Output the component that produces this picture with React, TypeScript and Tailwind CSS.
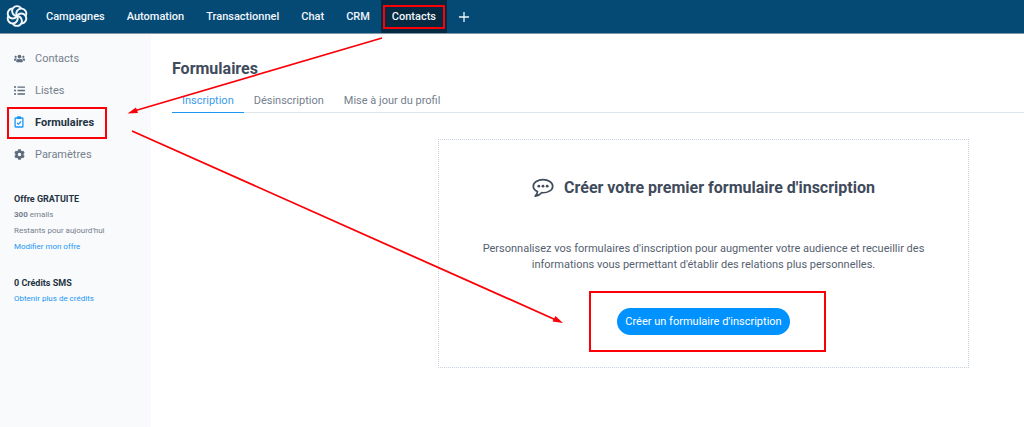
import type { ReactNode } from "react";
import { FaCog, FaListUl, FaUsers } from "react-icons/fa";

const NAV = ["Campagnes", "Automation", "Transactionnel", "Chat", "CRM"];
const TABS = ["Inscription", "Désinscription", "Mise à jour du profil"];

function Logo() {
  return (
    <svg viewBox="0 0 24 24" className="size-[22px]" fill="none" stroke="#f1f6fa" strokeWidth="2.1" aria-label="Sendinblue">
      {[0, 60, 120, 180, 240, 300].map((angle) => (
        <path key={angle} d="M12 12A5.4 5.4 0 1 1 16.7 3.9" transform={`rotate(${angle} 12 12)`} />
      ))}
    </svg>
  );
}

function ClipboardIcon() {
  return (
    <svg viewBox="0 0 10 12" className="h-3 w-[10px]" fill="none" stroke="#1a96f5" strokeWidth="1.3">
      <rect x="1.1" y="2" width="7.8" height="9" rx="0.6" />
      <path d="M3 2.2h4M3.2 1.2h3.6" strokeWidth="1.8" />
      <path d="M3.1 6.9l1.4 1.3 2.6-2.8" />
    </svg>
  );
}

function SpeechIcon() {
  return (
    <svg viewBox="0 0 22 20" className="h-5 w-[22px]" fill="none" stroke="#3f4b5c" strokeWidth="1.7">
      <path
        d="M11 1.6C5.800 1.600 1.300 4.500 1.300 8.200C1.300 10.500 3.100 12.500 5.500 13.600C5.500 15.400 4.500 16.900 3.200 18.200C6.100 17.700 8.200 16.500 9.600 14.700C15.800 15.200 20.700 12.200 20.700 8.200C20.700 4.500 16.200 1.600 11 1.600Z"
        strokeLinejoin="round"
      />
      <g fill="#3f4b5c" stroke="none">
        <circle cx="6.800" cy="8.200" r="1.400" />
        <circle cx="11" cy="8.200" r="1.400" />
        <circle cx="15.200" cy="8.200" r="1.400" />
      </g>
    </svg>
  );
}

function Highlight({ className }: { className: string }) {
  return <span aria-hidden="true" className={`pointer-events-none absolute border-2 border-[#fb0007] ${className}`} />;
}

function SideLink({ icon, label, active = false }: { icon: ReactNode; label: string; active?: boolean }) {
  return (
    <a
      href="#"
      className={`relative flex h-8 items-center pl-[14px] text-[11px] ${
        active ? "font-bold text-[#243342]" : "text-[#75808d]"
      }`}
    >
      <span className="flex w-[21px] items-center pb-[2px] text-[#5c6b7d]">{icon}</span>
      {label}
      {active && <Highlight className="inset-y-0 left-[7px] w-[100px]" />}
    </a>
  );
}

export default function App() {
  return (
    <div className="relative flex min-h-screen flex-col overflow-hidden bg-white font-['Roboto',sans-serif]">
      <header className="flex h-[34px] items-stretch border-b border-[#8197a8] bg-[#044a75] pl-[6px] text-[11px] font-medium text-[#f1f6fa]">
        <a href="#" className="flex items-center pb-[2px]">
          <Logo />
        </a>
        <nav className="ml-[7px] flex items-stretch">
          {NAV.map((item) => (
            <a key={item} href="#" className="flex items-center px-[11px] pt-[2px]">
              {item}
            </a>
          ))}
          <a href="#" className="relative flex min-w-[66px] items-center justify-center bg-[#052a42] pt-[2px]">
            Contacts
            <Highlight className="inset-x-[2px] top-[5px] bottom-1" />
          </a>
        </nav>
        <button type="button" aria-label="Ajouter" className="flex items-center px-3">
          <svg viewBox="0 0 10 10" className="size-[10px]" stroke="currentColor" strokeWidth="1.3">
            <path d="M5 0v10M0 5h10" />
          </svg>
        </button>
      </header>

      <div className="flex grow">
        <aside className="w-[151px] shrink-0 bg-[#f9fafc] pt-[9px]">
          <nav className="flex flex-col">
            <SideLink icon={<FaUsers className="size-[11px]" />} label="Contacts" />
            <SideLink icon={<FaListUl className="size-[11px]" />} label="Listes" />
            <SideLink icon={<ClipboardIcon />} label="Formulaires" active />
            <SideLink icon={<FaCog className="size-[11px]" />} label="Paramètres" />
          </nav>
          <div className="mt-5 pl-[14px] text-[8px] leading-4 text-[#75808d]">
            <h2 className="text-[9px] leading-4 font-bold text-[#243342]">Offre GRATUITE</h2>
            <p>
              <b>300</b> emails
            </p>
            <p>Restants pour aujourd'hui</p>
            <a href="#" className="block text-[#1a96f5]">Modifier mon offre</a>
            <h2 className="mt-5 text-[9px] leading-4 font-bold text-[#243342]">0 Crédits SMS</h2>
            <a href="#" className="block text-[#1a96f5]">Obtenir plus de crédits</a>
          </div>
        </aside>

        <main className="grow pt-[23px] pl-[21px]">
          <h1 className="text-base leading-6 font-bold text-[#3f4b5c]">Formulaires</h1>
          <div role="tablist" className="mt-2 flex h-6 border-b border-[#dce4ec] text-[11px]">
            {TABS.map((tab, i) => (
              <button
                key={tab}
                type="button"
                role="tab"
                aria-selected={i === 0}
                className={`-mb-px border-b px-[10px] pt-[2px] ${
                  i === 0 ? "border-[#1a96f5] text-[#3a9ce8]" : "border-transparent text-[#75808d]"
                }`}
              >
                {tab}
              </button>
            ))}
          </div>

          <div className="mt-[26px] flex justify-end pr-[55px]">
            <section className="flex w-[531px] flex-col items-center border border-dotted border-[#c6d2de] pt-9 pb-8 text-center">
              <h2 className="flex items-center gap-[10px] text-base leading-6 font-bold text-[#3f4b5c]">
                <SpeechIcon />
                Créer votre premier formulaire d'inscription
              </h2>
              <p className="mt-[41px] w-[450px] text-[11px] leading-4 text-[#56616f]">
                Personnalisez vos formulaires d'inscription pour augmenter votre audience et recueillir des informations
                vous permettant d'établir des relations plus personnelles.
              </p>
              <div className="relative mt-[35px]">
                <button type="button" className="block h-[27px] rounded-full bg-[#0092ff] px-2 pt-px text-[11px] text-white">
                  Créer un formulaire d'inscription
                </button>
                <Highlight className="-inset-y-[17px] -right-9 -left-7" />
              </div>
            </section>
          </div>
        </main>
      </div>

      <svg aria-hidden="true" className="pointer-events-none absolute top-0 left-0 h-[427px] w-[1024px]" viewBox="0 0 1024 427" fill="#fb0007">
        <path d="M382 38L134 111M132 131L556 320" stroke="#fb0007" strokeWidth="1.8" />
        <path d="M127.500 113.500L136 107.500L138 113Z" />
        <path d="M563 323L552.500 321.500L555.500 316Z" />
      </svg>
    </div>
  );
}
